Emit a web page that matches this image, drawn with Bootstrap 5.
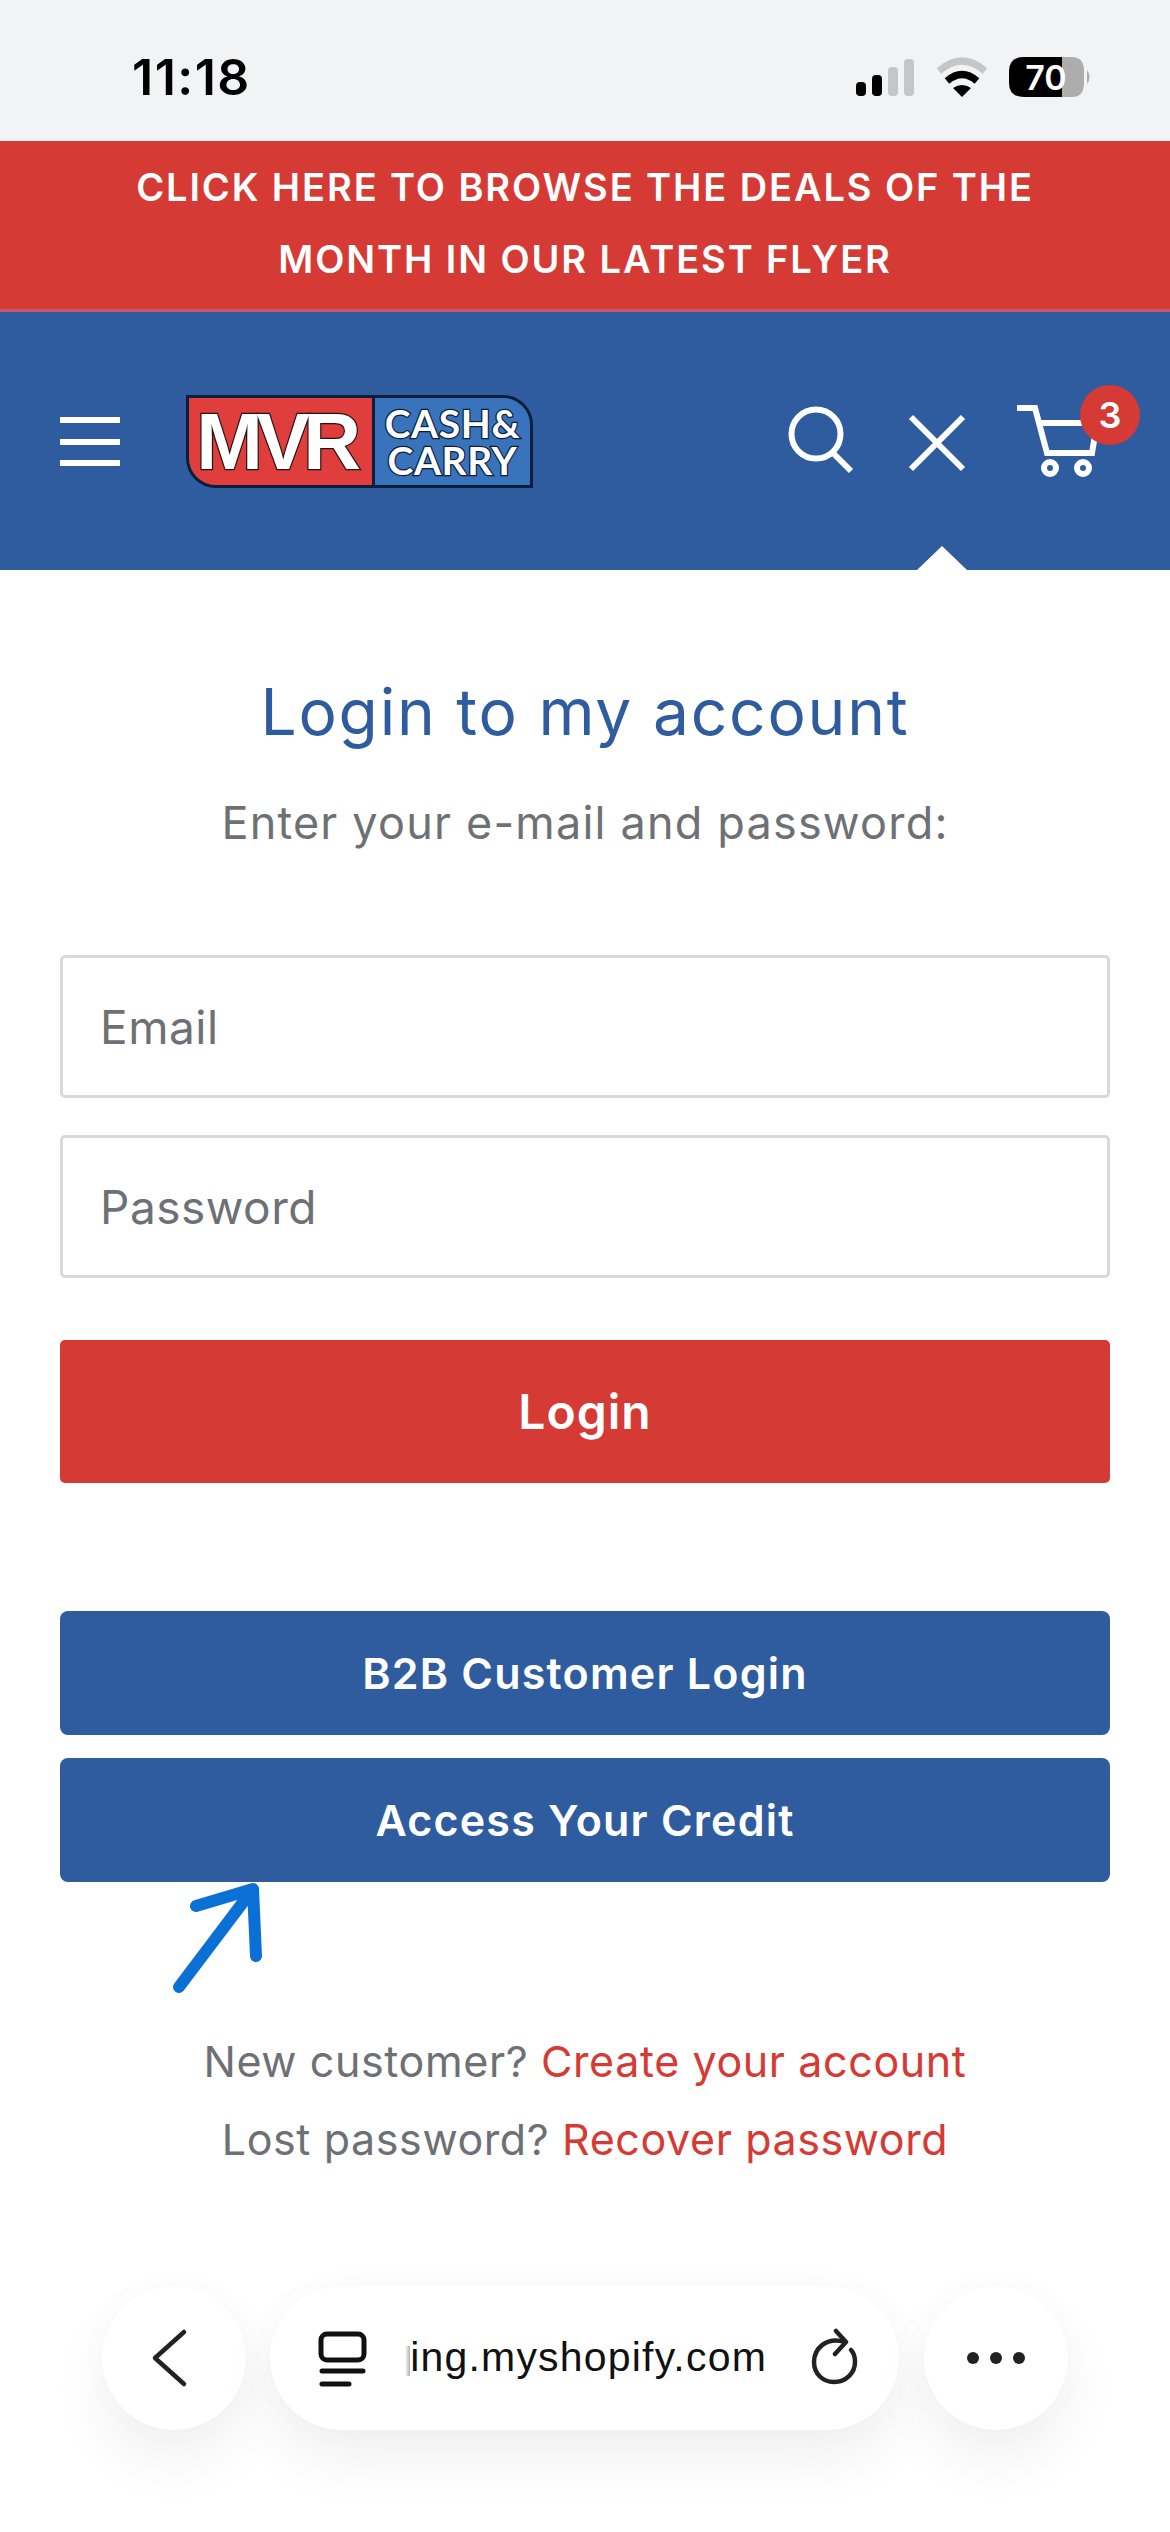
<!DOCTYPE html>
<html lang="en">
<head>
    <meta charset="UTF-8">
    <meta name="viewport" content="width=device-width, initial-scale=1.0">
    <title>Login to my account</title>
    <link href="https://cdn.jsdelivr.net/npm/bootstrap@5.3.0/dist/css/bootstrap.min.css" rel="stylesheet">
    <script src="https://cdn.jsdelivr.net/npm/bootstrap@5.3.0/dist/js/bootstrap.bundle.min.js"></script>
    <style>
        body { font-family: Inter, "Open Sans", sans-serif; background: #fff; color: #6d7175; }
        .status-bar { height: 141px; background: #f2f3f5; padding: 0 77px 0 132px; }
        .status-time { font-size: 50px; font-weight: 600; color: #000; letter-spacing: 1.5px; line-height: 1; margin-top: 52px; }
        .status-icons { margin-top: 57px; }
        .promo { background: #d53a35; height: 171px; border-bottom: 3px solid #c9566b; padding-top: 10px; color: #fff; font-size: 38px; font-weight: 600; line-height: 72px; letter-spacing: 1.9px; }
        .site-header { position: relative; background: #2e5c9f; height: 258px; padding: 0 60px; }
        .burger { width: 60px; gap: 15.5px; margin-right: 66px; margin-top: 1px; }
        .burger span { height: 6px; background: #fff; }
        .brand { width: 347px; height: 93px; border: 3px solid #0b1e3c; border-radius: 0 30px 0 30px; overflow: hidden; margin-top: 1px; color: #fff; }
        .brand-red { width: 183px; background: #df3e3c; font: 700 80px/1 "Liberation Sans", sans-serif; letter-spacing: -6.5px; -webkit-text-stroke: 2.5px #2a1214; paint-order: stroke fill; padding-right: 10px; }
        .brand-blue { flex: 1; background: #3873bb; border-left: 3px solid #0b1e3c; font: 700 39px/37px Lato, sans-serif; letter-spacing: .6px; padding-top: 7px; -webkit-text-stroke: 2.5px #0b1e3c; paint-order: stroke fill; }
        .head-search { margin-right: 50px; }
        .head-close { margin-right: 44px; }
        .head-cart { position: relative; width: 98px; height: 82px; }
        .cart-count { position: absolute; left: 68px; top: -15px; width: 60px; height: 60px; background: #d53a35; font-size: 36px; font-weight: 600; color: #fff; }
        .notch { position: absolute; left: 917px; bottom: 0; width: 50px; height: 24px; background: #fff; clip-path: polygon(50% 0, 100% 100%, 0 100%); }
        .login-title { color: #2e5c9f; font-size: 64px; font-weight: 400; line-height: 1; letter-spacing: 1.8px; margin: 110px 0 0; }
        .login-sub { font-size: 45px; line-height: 1; letter-spacing: 1.2px; margin: 56px 0 0; color: #6d7175; }
        .login-form { padding: 0 60px; margin-top: 110px; }
        .login-form .form-control { height: 143px; border: 3px solid #d9d9d9; border-radius: 5px; font-size: 46px; letter-spacing: .5px; padding: 0 37px; margin-bottom: 37px; color: #6d7175; }
        .login-form .form-control::placeholder { color: #6d7175; opacity: 1; }
        .btn-login { height: 143px; background: #d53a35; border: 0; border-radius: 5px; color: #fff; font-size: 48px; font-weight: 600; letter-spacing: 1px; margin: 25px 0 128px; }
        .btn-login:hover { background: #d53a35; color: #fff; }
        .btn-blue { height: 124px; background: #2e5c9f; border: 0; border-radius: 8px; color: #fff; font-size: 43px; font-weight: 600; letter-spacing: 1.2px; }
        .btn-blue:hover { background: #2e5c9f; color: #fff; }
        .btn-gap { margin-bottom: 23px; }
        .arrow-mark { display: block; margin-left: 110px; }
        .account-links { font-size: 43px; line-height: 78px; letter-spacing: .6px; color: #6d7175; }
        .account-links a { color: #d53a35; text-decoration: none; }
        .browser-bar { padding: 0 0 102px 102px; margin-top: 108px; }
        .bar-pill { height: 144px; background: #fff; border-radius: 72px; box-shadow: 0 30px 60px rgba(0,0,0,.06), 0 0 40px rgba(0,0,0,.02); }
        .bar-round { width: 144px; }
        .bar-url { width: 629px; padding-left: 46px; margin: 0 25px 0 24px; }
        .url-text { width: 362px; margin: 0 41px 0 37px; white-space: nowrap; font: 400 41px/1.3 "Liberation Sans", sans-serif; letter-spacing: 1.2px; color: #111; }
        .url-fade { width: 6px; height: 30px; margin-top: 6px; background: linear-gradient(90deg, rgba(0,0,0,0), rgba(0,0,0,.3)); }
    </style>
</head>
<body>

    <!-- Phone status bar -->
    <div class="status-bar d-flex justify-content-between align-items-start">
        <div class="status-time">11:18</div>
        <svg class="status-icons" width="240" height="42" viewBox="0 0 240 42">
            <rect x="3" y="25" width="10" height="14" rx="4"/>
            <rect x="19" y="18" width="10" height="21" rx="4"/>
            <rect x="35" y="10" width="10" height="29" rx="4" fill="#c5c6c8"/>
            <rect x="51" y="2" width="10" height="37" rx="4" fill="#c5c6c8"/>
            <path d="M86 14 Q109 -6 132 14" fill="none" stroke="#c5c6c8" stroke-width="7"/>
            <path d="M94 24 Q109 11 124 24" fill="none" stroke="#000" stroke-width="7"/>
            <path d="M100 31 Q109 25 118 31 L109 40 Z"/>
            <path d="M171 0 H209 V40 H171 Q156 40 156 26 V14 Q156 0 171 0 Z"/>
            <path d="M209 0 H219 Q231 0 231 14 V26 Q231 40 219 40 H209 Z" fill="#adadad"/>
            <path d="M234 13 Q239 20 234 27 Z" fill="#adadad"/>
            <text x="193" y="33" text-anchor="middle" font-family="Inter, sans-serif" font-size="34" font-weight="600" fill="#fff">70</text>
        </svg>
    </div>

    <!-- Promo banner -->
    <div class="promo text-center">CLICK HERE TO BROWSE THE DEALS OF THE<br>MONTH IN OUR LATEST FLYER</div>

    <!-- Header -->
    <header class="site-header d-flex align-items-center">
        <div class="burger d-flex flex-column">
            <span></span><span></span><span></span>
        </div>
        <div class="brand d-flex">
            <div class="brand-red d-flex align-items-center justify-content-center">MVR</div>
            <div class="brand-blue text-center">CASH&amp;<br>CARRY</div>
        </div>
        <div class="ms-auto d-flex align-items-center">
            <svg class="head-search" width="70" height="82" viewBox="786 400 70 82" fill="none" stroke="#fff" stroke-width="6">
                <circle cx="816" cy="434" r="24.5"/>
                <path d="M832 452 L851 471"/>
            </svg>
            <svg class="head-close" width="62" height="82" viewBox="906 400 62 82" fill="none" stroke="#fff" stroke-width="6">
                <path d="M911 417 L963 469 M963 417 L911 469"/>
            </svg>
            <div class="head-cart">
                <svg width="98" height="82" viewBox="1012 400 98 82" fill="none" stroke="#fff" stroke-width="6">
                    <path d="M1017 408 H1035 L1047 453 H1092 L1097 423 H1041"/>
                    <circle cx="1050" cy="468" r="6"/>
                    <circle cx="1083" cy="468" r="6"/>
                </svg>
                <div class="cart-count rounded-circle d-flex align-items-center justify-content-center">3</div>
            </div>
        </div>
        <div class="notch"></div>
    </header>

    <!-- Login -->
    <main>
        <h1 class="login-title text-center">Login to my account</h1>
        <p class="login-sub text-center">Enter your e-mail and password:</p>

        <form class="login-form">
            <input type="email" class="form-control" placeholder="Email">
            <input type="password" class="form-control" placeholder="Password">
            <button type="button" class="btn btn-login w-100">Login</button>
            <button type="button" class="btn btn-blue w-100 btn-gap">B2B Customer Login</button>
            <button type="button" class="btn btn-blue w-100">Access Your Credit</button>
            <svg class="arrow-mark" width="100" height="140" viewBox="170 1881 100 140" fill="none" stroke="#0a70d6" stroke-width="12" stroke-linecap="round" stroke-linejoin="round">
                <path d="M179 1986 L253 1888 M196 1905 L253 1888 L256 1955"/>
            </svg>
        </form>

        <div class="account-links text-center">
            <div>New customer? <a href="#">Create your account</a></div>
            <div>Lost password? <a href="#">Recover password</a></div>
        </div>
    </main>

    <!-- Browser bottom bar -->
    <div class="browser-bar d-flex">
        <div class="bar-pill bar-round d-flex align-items-center justify-content-center">
            <svg width="60" height="60" viewBox="144 2328 60 60" fill="none" stroke="#222" stroke-width="4.5" stroke-linecap="round" stroke-linejoin="round">
                <path d="M184 2332 L155 2358 L184 2384"/>
            </svg>
        </div>
        <div class="bar-pill bar-url d-flex align-items-center">
            <svg width="52" height="60" viewBox="316 2328 52 60" fill="none" stroke="#111" stroke-width="5" stroke-linecap="round">
                <rect x="321" y="2334" width="43" height="26" rx="6"/>
                <path d="M322 2371 H363 M322 2384 H349"/>
            </svg>
            <div class="url-text d-flex justify-content-end align-items-center"><div class="url-fade me-auto"></div><span>ing.myshopify.com</span></div>
            <svg width="52" height="60" viewBox="808 2328 52 60" fill="none" stroke="#222" stroke-width="4.5" stroke-linecap="round" stroke-linejoin="round">
                <path d="M845 2342 C826 2336 814 2349 814 2362 C814 2374 823 2382 834 2382 C846 2382 855 2373 855 2362 C855 2357 854 2353 851 2350"/>
                <path d="M836 2331 L846 2342 L835 2354"/>
            </svg>
        </div>
        <div class="bar-pill bar-round d-flex align-items-center justify-content-center">
            <svg width="60" height="20" viewBox="965 2348 60 20" fill="#222">
                <circle cx="972" cy="2358" r="6"/>
                <circle cx="995" cy="2358" r="6"/>
                <circle cx="1018" cy="2358" r="6"/>
            </svg>
        </div>
    </div>

</body>
</html>
